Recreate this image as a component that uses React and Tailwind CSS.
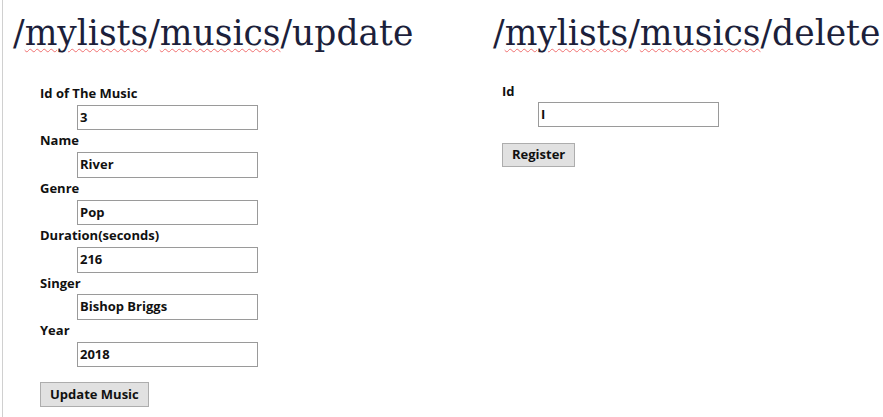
export default function App() {
  const fields = [
    ["Id of The Music", "3"],
    ["Name", "River"],
    ["Genre", "Pop"],
    ["Duration(seconds)", "216"],
    ["Singer", "Bishop Briggs"],
    ["Year", "2018"],
  ];
  const sans = "font-['Open_Sans',sans-serif]";
  const title =
    "font-['DejaVu_Serif',serif] text-[34.5px] leading-[40px] text-[#1c1f3b] whitespace-nowrap mt-[13px]";
  const wavy =
    "underline decoration-wavy decoration-[#f07070] decoration-1 underline-offset-[3px]";
  return (
    <div className="w-[883px] h-[417px] bg-white flex overflow-hidden">
      <div className="w-[2px] shrink-0" />
      <div className="w-[1px] shrink-0 bg-[#d0d0d0]" />
      <div className="w-[490px] shrink-0 pl-[10px]">
        <h1 className={title}>
          /<span className={wavy}>mylists</span>/<span className={wavy}>musics</span>/update
        </h1>
        <div className={`mt-[30px] pl-[27px] ${sans} text-[13px] font-bold text-[#111]`}>
          {fields.map(([label, value]) => (
            <div key={label}>
              <div className="h-[21.8px] leading-[21.8px]">{label}</div>
              <div className="ml-[37px] w-[181px] h-[25.6px] border border-[#9a9a9a] pl-[2px] flex items-center">
                {value}
              </div>
            </div>
          ))}
          <button className="mt-[15px] h-[25px] px-[9px] bg-[#e1e1e1] border border-[#adadad] flex items-center font-bold">
            Update Music
          </button>
        </div>
      </div>
      <div className="flex-1">
        <h1 className={title}>
          /<span className={wavy}>mylists</span>/<span className={wavy}>musics</span>/delete
        </h1>
        <div className={`mt-[27px] pl-[9px] ${sans} text-[13px] font-bold text-[#111]`}>
          <div className="h-[22.3px] leading-[22.3px]">Id</div>
          <div className="ml-[36px] w-[181px] h-[25px] border border-[#9a9a9a] pl-[2px] flex items-center">
            I
          </div>
          <button className="mt-[15.7px] h-[24.3px] px-[9px] bg-[#e1e1e1] border border-[#adadad] flex items-center font-bold">
            Register
          </button>
        </div>
      </div>
    </div>
  );
}
